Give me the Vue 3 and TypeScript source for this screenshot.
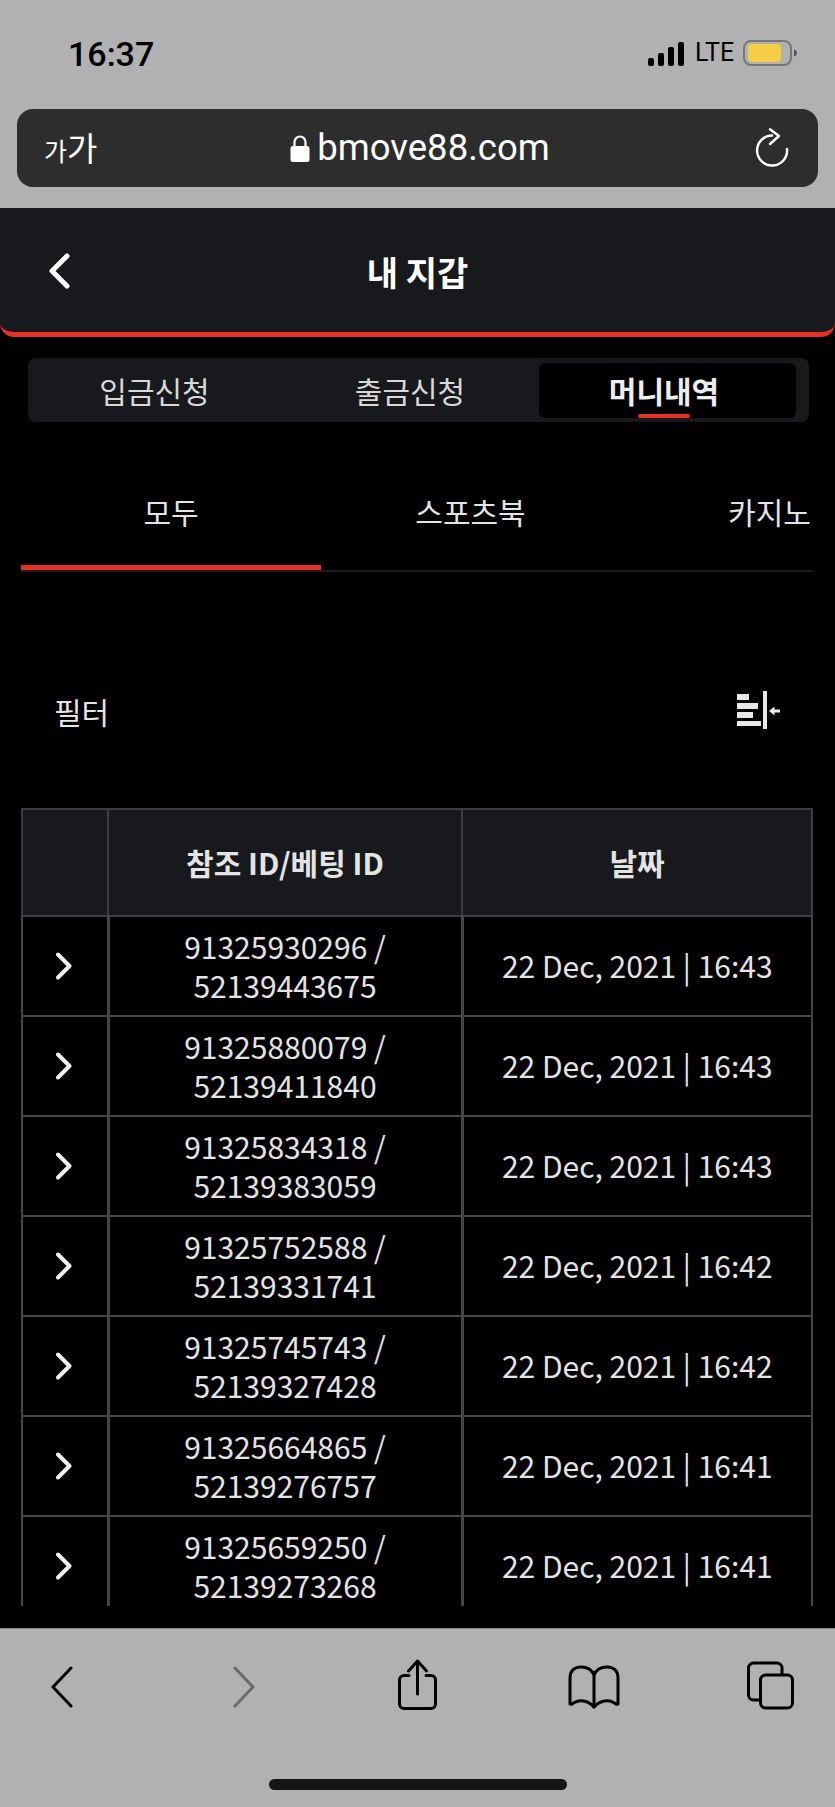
<template>
  <div class="phone">
    <!-- 상단 브라우저 영역 -->
    <div class="browser-top">
      <div class="status-bar">
        <span class="time">16:37</span>
        <div class="status-right">
          <svg class="signal" width="36" height="24" viewBox="0 0 36 24">
            <rect x="0" y="16" width="6" height="8" rx="2" />
            <rect x="10" y="11" width="6" height="13" rx="2" />
            <rect x="20" y="5" width="6" height="19" rx="2" />
            <rect x="30" y="0" width="6" height="24" rx="2" />
          </svg>
          <span class="lte">LTE</span>
          <svg class="battery" width="54" height="26" viewBox="0 0 54 26">
            <rect x="1" y="1" width="47" height="24" rx="7" fill="none" stroke="#777" stroke-width="2" />
            <rect x="5" y="4" width="33" height="18" rx="4" fill="#f6ce46" />
            <path d="M51 9.5c2 .6 3 2 3 3.500s-1 2.900-3 3.500z" fill="#555" />
          </svg>
        </div>
      </div>
      <div class="url-bar">
        <span class="aa"><small>가</small>가</span>
        <div class="url">
          <svg width="20" height="27" viewBox="0 0 20 27">
            <path d="M4.500 11V7a5.500 5.500 0 0 1 11 0v4" fill="none" stroke="#fff" stroke-width="2.200" />
            <rect x="0.500" y="11" width="19" height="16" rx="2.500" fill="#fff" />
          </svg>
          <span>bmove88.com</span>
        </div>
        <svg class="reload" width="34" height="40" viewBox="0 0 34 40" fill="none" stroke="#fff" stroke-width="2.400" stroke-linecap="round" stroke-linejoin="round">
          <path d="M18 7.500A15 15 0 1 0 33 21" />
          <path d="M16 1.300L25 8l-9 8" />
        </svg>
      </div>
    </div>

    <!-- 페이지 -->
    <div class="page">
      <header class="app-header">
        <svg class="back" width="22" height="36" viewBox="0 0 22 36" fill="none" stroke="#fff" stroke-width="5" stroke-linecap="round" stroke-linejoin="round">
          <path d="M19 3L4 18l15 15" />
        </svg>
        <h1>내 지갑</h1>
      </header>

      <div class="segment">
        <div v-for="s in segments" :key="s" class="seg-item" :class="{ active: s === '머니내역' }">{{ s }}</div>
      </div>

      <div class="sub-tabs">
        <div v-for="(t, i) in subTabs" :key="t" class="sub-tab" :class="{ active: i === 0 }">{{ t }}</div>
      </div>

      <div class="filter-row">
        <span>필터</span>
        <svg width="45" height="38" viewBox="0 0 45 38" fill="#e8e8e8">
          <rect x="0" y="3" width="12" height="6" />
          <rect x="0" y="12" width="21" height="6" />
          <rect x="0" y="21" width="16" height="6" />
          <rect x="0" y="30" width="24" height="5" />
          <rect x="26" y="0" width="4" height="38" />
          <path d="M32 20l5.500-4.500v3H43v3h-5.500v3z" />
        </svg>
      </div>

      <div class="table-wrap">
        <table>
          <thead>
            <tr>
              <th class="col-arrow"></th>
              <th class="col-id">참조 ID/베팅 ID</th>
              <th>날짜</th>
            </tr>
          </thead>
          <tbody>
            <tr v-for="row in rows" :key="row.ref">
              <td class="arrow-cell">
                <svg width="18" height="28" viewBox="0 0 18 28" fill="none" stroke="#eee" stroke-width="4" stroke-linecap="round" stroke-linejoin="round">
                  <path d="M3 2.500L14.500 14 3 25.500" />
                </svg>
              </td>
              <td>{{ row.ref }} /<br />{{ row.bet }}</td>
              <td class="date-cell">22 Dec, 2021 | {{ row.time }}</td>
            </tr>
          </tbody>
        </table>
      </div>
    </div>

    <!-- 하단 툴바 -->
    <div class="browser-bottom">
      <div class="toolbar">
        <svg width="24" height="42" viewBox="0 0 24 42" fill="none" stroke="#000" stroke-width="3" stroke-linecap="round" stroke-linejoin="round">
          <path d="M21 2L3 21l18 19" />
        </svg>
        <svg width="24" height="42" viewBox="0 0 24 42" fill="none" stroke="#6a6a6a" stroke-width="3" stroke-linecap="round" stroke-linejoin="round">
          <path d="M3 2l18 19L3 40" />
        </svg>
        <svg width="42" height="52" viewBox="0 0 42 52" fill="none" stroke="#000" stroke-width="3" stroke-linecap="round" stroke-linejoin="round">
          <path d="M12 16.500H7A4.500 4.500 0 0 0 2.500 21v24A4.500 4.500 0 0 0 7 49.500h27a4.500 4.500 0 0 0 4.500-4.500V21a4.500 4.500 0 0 0-4.500-4.500h-5" />
          <path d="M20.500 35V2M11.500 12l9-10 9 10" />
        </svg>
        <svg width="52" height="44" viewBox="0 0 52 44" fill="none" stroke="#000" stroke-width="3" stroke-linecap="round" stroke-linejoin="round">
          <path d="M26 10C24 5 19 2 13 2 5.500 2 2 6.500 2 13v26c1 1 2 0 3.500-1 6-3.500 14-3 20.500 4 6.500-7 14.500-7.500 20.500-4 1.500 1 2.500 2 3.500 1V13c0-6.500-3.500-11-11-11-6 0-11 3-13 8z" />
          <path d="M26 10v32" />
        </svg>
        <svg width="48" height="50" viewBox="0 0 48 50" fill="none" stroke="#000" stroke-width="3" stroke-linecap="round" stroke-linejoin="round">
          <path d="M36 13V7a5 5 0 0 0-5-5H7.500a5 5 0 0 0-5 5v27a5 5 0 0 0 5 5h6" />
          <rect x="14.500" y="14" width="32" height="33" rx="5" />
        </svg>
      </div>
      <div class="home-bar"></div>
    </div>
  </div>
</template>

<script setup lang="ts">
interface Row {
  ref: string;
  bet: string;
  time: string;
}

const segments = ['입금신청', '출금신청', '머니내역'];
const subTabs = ['모두', '스포츠북', '카지노'];

const rows: Row[] = [
  { ref: '91325930296', bet: '52139443675', time: '16:43' },
  { ref: '91325880079', bet: '52139411840', time: '16:43' },
  { ref: '91325834318', bet: '52139383059', time: '16:43' },
  { ref: '91325752588', bet: '52139331741', time: '16:42' },
  { ref: '91325745743', bet: '52139327428', time: '16:42' },
  { ref: '91325664865', bet: '52139276757', time: '16:41' },
  { ref: '91325659250', bet: '52139273268', time: '16:41' }
];
</script>

<style>
html,
body {
  margin: 0;
  background: #000;
}
</style>

<style scoped>
.phone {
  width: 835px;
  height: 1807px;
  display: flex;
  flex-direction: column;
  overflow: hidden;
  background: #000;
  font-family: 'Noto Sans CJK KR', 'Noto Sans', sans-serif;
}

.browser-top {
  flex: 0 0 208px;
  box-sizing: border-box;
  background: #b1b1b1;
  padding: 0 17px;
}

.status-bar {
  height: 109px;
  display: flex;
  justify-content: space-between;
  align-items: flex-start;
  padding: 0 21px 0 51px;
  box-sizing: border-box;
}

.time {
  margin-top: 34px;
  font-family: Roboto, sans-serif;
  font-size: 34px;
  line-height: 40px;
  font-weight: 500;
  color: #000;
}

.status-right {
  margin-top: 40px;
  display: flex;
  align-items: center;
}

.signal {
  fill: #000;
  margin-top: 1px;
}

.lte {
  margin-left: 11px;
  width: 48px;
  font-family: Roboto, sans-serif;
  font-size: 25px;
  line-height: 26px;
  color: #000;
}

.url-bar {
  height: 78px;
  padding: 0 30px 0 27px;
  display: flex;
  align-items: center;
  justify-content: space-between;
  background: #2d2d2d;
  border-radius: 16px;
  color: #fff;
}

.aa {
  width: 52px;
  font-size: 33px;
  line-height: 40px;
  white-space: nowrap;
}

.aa small {
  font-size: 25px;
}

.url {
  margin-left: -10px;
  display: flex;
  align-items: center;
  gap: 7px;
  font-family: Roboto, sans-serif;
  font-size: 36.500px;
  line-height: 40px;
}

.reload {
  overflow: visible;
}

.app-header {
  height: 129px;
  box-sizing: border-box;
  position: relative;
  background: #17191d;
  border-bottom: 5px solid #e63122;
  border-radius: 0 0 14px 14px;
  display: flex;
  justify-content: center;
}

.back {
  position: absolute;
  left: 48px;
  top: 45px;
}

h1 {
  margin: 42px 0 0;
  font-size: 34px;
  line-height: 44px;
  font-weight: 700;
  color: #fff;
}

.segment {
  margin: 21px 26px 0 28px;
  height: 64px;
  box-sizing: border-box;
  padding: 5px 13px 4px 0;
  display: grid;
  grid-template-columns: 253px 258px 257px;
  background: #17191d;
  border-radius: 8px;
}

.seg-item {
  font-size: 30px;
  line-height: 55px;
  text-align: center;
  color: #d8d8d8;
}

.seg-item.active {
  position: relative;
  padding-right: 7px;
  background: #000;
  border-radius: 6px;
  color: #eee;
  font-weight: 700;
}

.seg-item.active::after {
  content: '';
  position: absolute;
  left: 99px;
  bottom: 0;
  width: 52px;
  height: 4px;
  border-radius: 2px;
  background: #e63122;
}

.sub-tabs {
  margin: 42px 22px 0 21px;
  height: 106px;
  display: flex;
  overflow: hidden;
  border-bottom: 2px solid #1c1e24;
  box-sizing: content-box;
}

.sub-tab {
  flex: 0 0 299px;
  box-sizing: border-box;
  padding-top: 25px;
  font-size: 30px;
  line-height: 44px;
  text-align: center;
  color: #e4e4e4;
}

.sub-tab.active {
  flex-basis: 300px;
  border-bottom: 6px solid #e63122;
  height: 107px;
}

.filter-row {
  margin: 110px 53px 0 54px;
  height: 58px;
  display: flex;
  align-items: center;
  justify-content: space-between;
  font-size: 30px;
  color: #e4e4e4;
}

.filter-row svg {
  margin-top: -2px;
}

.table-wrap {
  margin: 68px 22px 0 21px;
  height: 798px;
  overflow: hidden;
}

table {
  width: 100%;
  table-layout: fixed;
  border-collapse: collapse;
  color: #e4e4e4;
}

th,
td {
  border: 2px solid #46464a;
  padding: 0;
  text-align: center;
  font-size: 30px;
  line-height: 39px;
  font-weight: 400;
}

th {
  height: 105px;
  background: #17191d;
  border-color: #3c3e43;
  font-weight: 700;
}

td {
  height: 100px;
  box-sizing: border-box;
}

td + td {
  border-left-width: 3px;
}

.col-arrow {
  width: 84px;
}

.col-id {
  width: 352px;
}

.arrow-cell svg {
  display: block;
  margin: 0 auto;
  position: relative;
  left: -1px;
}

.date-cell {
  padding: 0 0 2px;
}

.browser-bottom {
  flex: 1;
  margin-top: 22px;
  background: #b1b1b1;
  border-top: 1px solid #8a8a8a;
  position: relative;
}

.toolbar {
  padding: 30px 0 0 50px;
  display: grid;
  grid-template-columns: 182px 165px 171px 178px auto;
  align-items: start;
}

.toolbar svg:nth-child(1),
.toolbar svg:nth-child(2) {
  margin-top: 7px;
}

.toolbar svg:nth-child(4) {
  margin-top: 6px;
}

.toolbar svg:nth-child(5) {
  margin-top: 2px;
}

.home-bar {
  position: absolute;
  left: 269px;
  top: 150px;
  width: 298px;
  height: 11px;
  border-radius: 6px;
  background: #151515;
}
</style>
